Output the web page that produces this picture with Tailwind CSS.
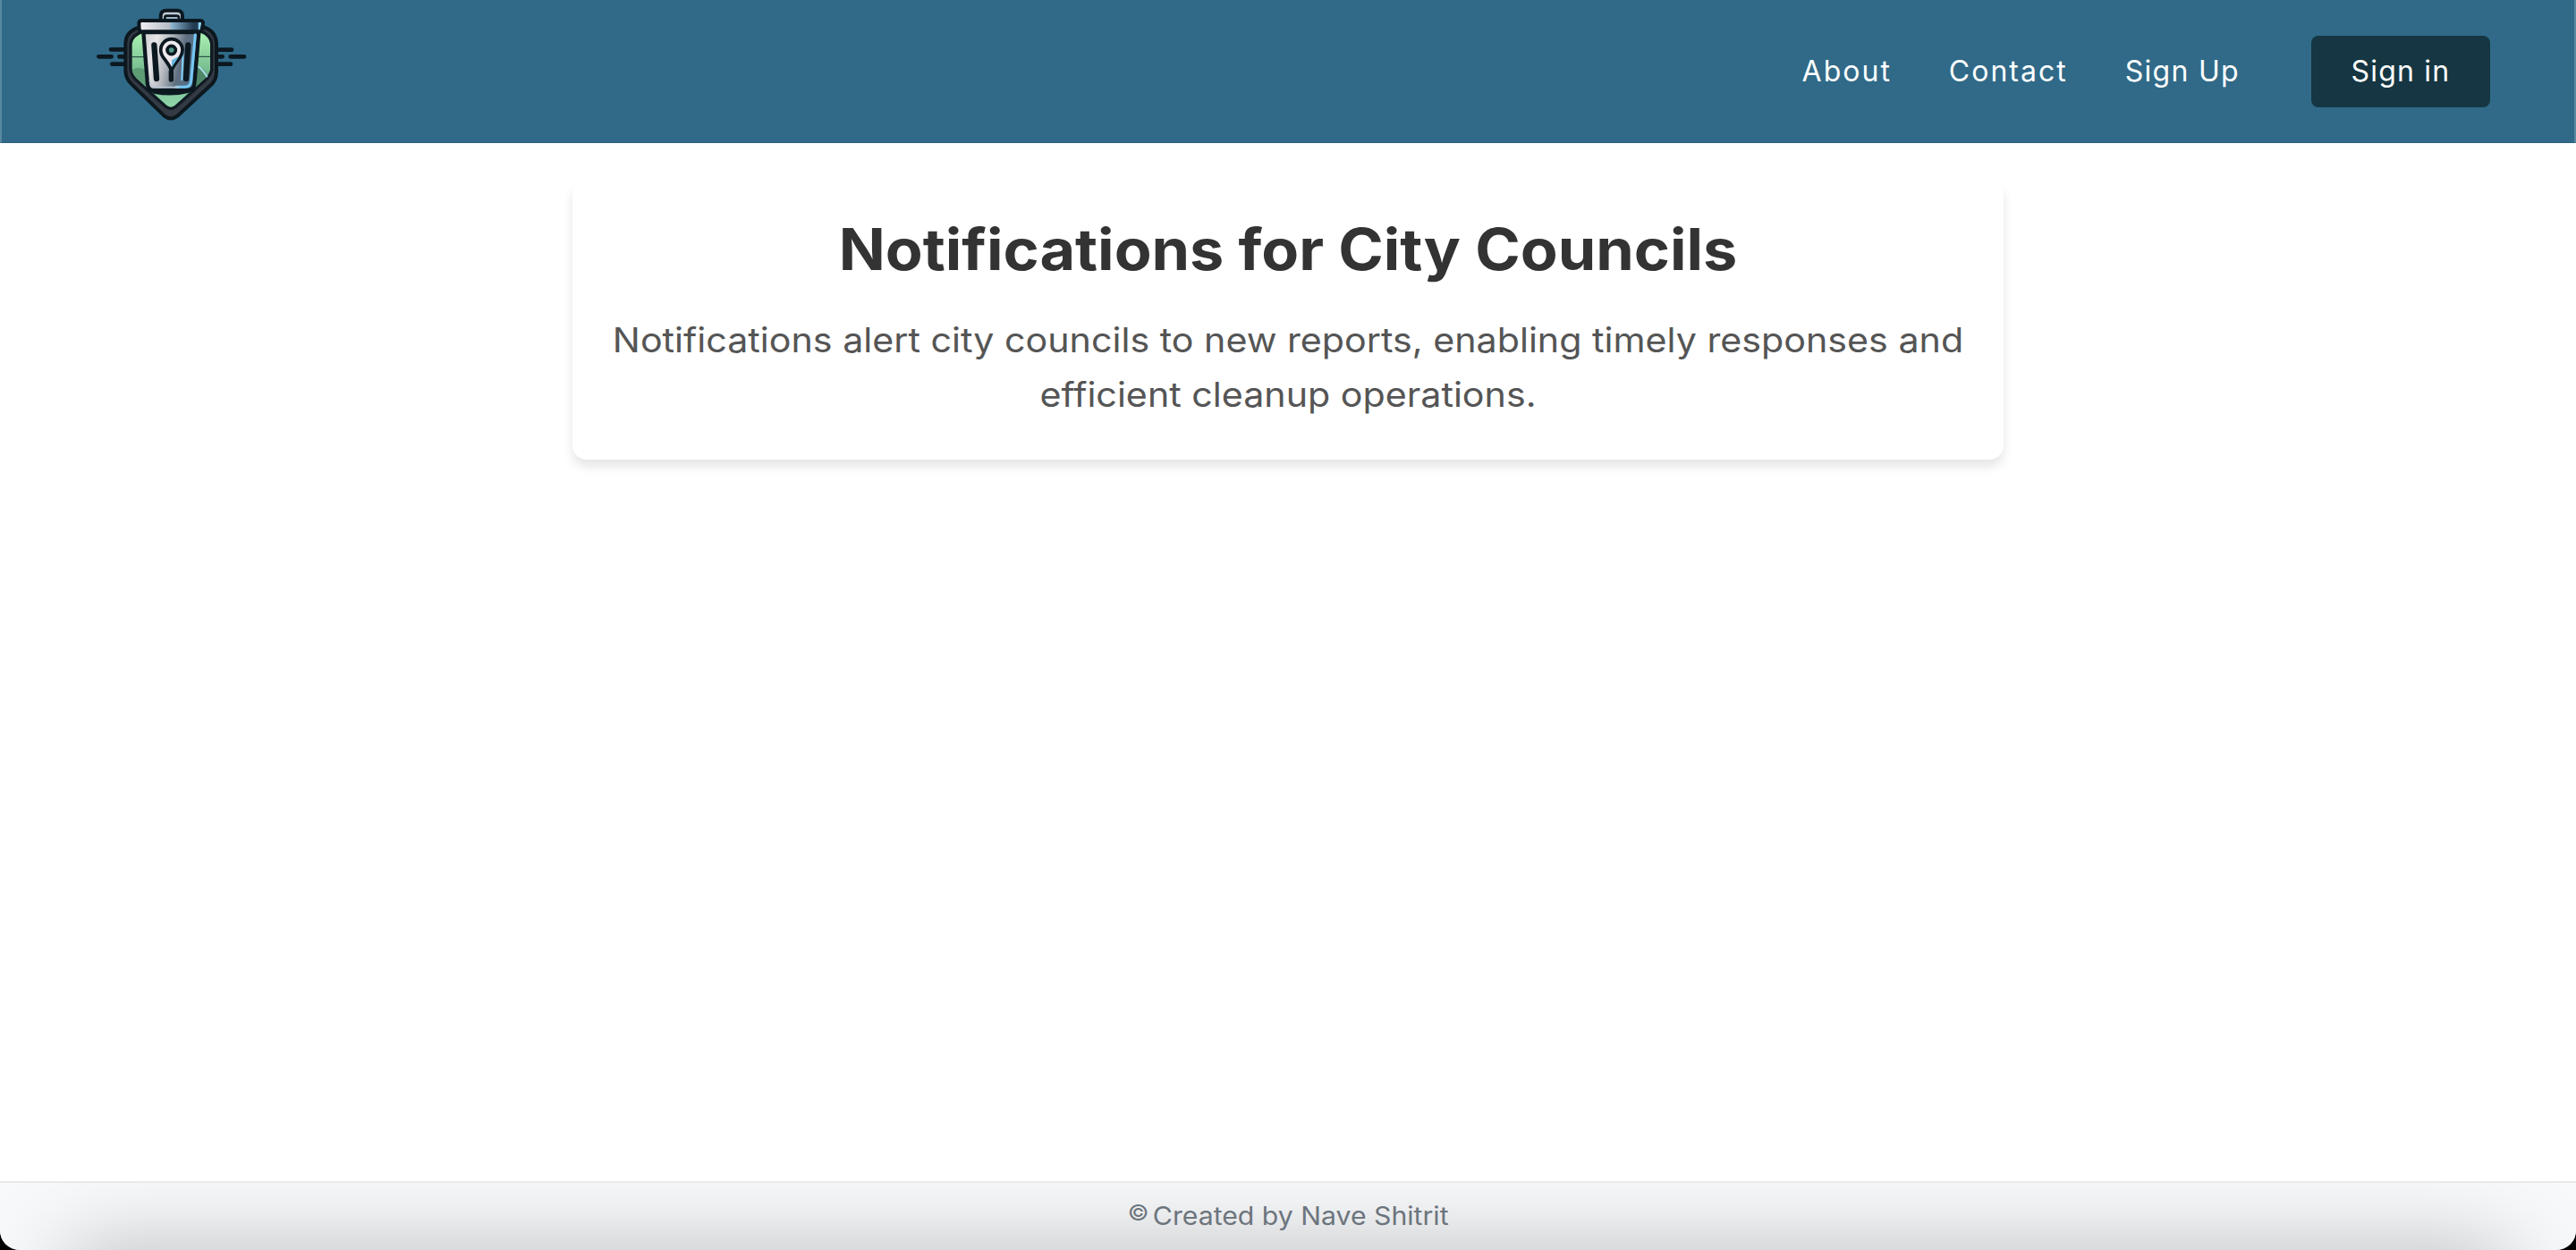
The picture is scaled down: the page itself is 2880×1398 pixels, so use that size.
<!DOCTYPE html>
<html lang="en">
<head>
<meta charset="utf-8">
<title>Notifications for City Councils</title>
<script src="https://cdn.jsdelivr.net/npm/@tailwindcss/browser@4"></script>
</head>
<body class="bg-black font-['Inter',sans-serif]">
<div class="flex h-[1398px] w-full flex-col overflow-hidden rounded-b-[22px] bg-white">
  <header class="flex h-40 shrink-0 items-center justify-between border-x-2 border-b border-x-[#5988a2] border-b-[#2b627f] bg-[#306a88] pr-[94px] pl-[88px] text-[32px] text-white">
    <svg class="h-40 w-[200px]" viewBox="0 0 600 480" fill="none" stroke-linecap="round" stroke-linejoin="round">
      <defs>
        <linearGradient id="green" x1="0" y1="0" x2="0" y2="1"><stop offset="0" stop-color="#aef5b4"/><stop offset=".55" stop-color="#72b78c"/><stop offset="1" stop-color="#91d7ac"/></linearGradient>
        <linearGradient id="metal" x1="0" y1="0" x2="1" y2=".25"><stop offset="0" stop-color="#c9cacd"/><stop offset=".25" stop-color="#e8e6e8"/><stop offset=".5" stop-color="#b4b8be"/><stop offset=".75" stop-color="#5f6f80"/><stop offset="1" stop-color="#52708a"/></linearGradient>
        <linearGradient id="lid" x1="0" y1="0" x2="1" y2="0"><stop offset="0" stop-color="#f5f3f4"/><stop offset=".48" stop-color="#b4bcc4"/><stop offset=".5" stop-color="#90b8d2"/><stop offset=".85" stop-color="#213c53"/><stop offset=".92" stop-color="#213c53"/><stop offset=".93" stop-color="#8fd2f5"/></linearGradient>
      </defs>
      <g stroke="#0c1820" stroke-width="14"><path d="M102 166h48M61 190h43M130 190h20M106 215h44M460 167h47M460 190h16M503 190h46M460 215h44"/></g>
      <path d="M205 90Q153 101 151 145V238Q152 264 172 283L281 389Q303 406 325 389L440 283Q456 266 456 240V145Q453 98 400 88Z" fill="#343a43" stroke="#0c171e" stroke-width="12"/>
      <path d="M207 106Q170 120 168 147V233Q170 251 185 267L288 359Q303 369 318 359L421 267Q436 252 440 234V147Q438 118 400 103Z" fill="url(#green)" stroke="#101b23" stroke-width="10"/>
      <path d="M173 233Q202 220 224 240V292L190 264Q175 250 173 233Z" fill="#5d9c74"/>
      <path d="M390 225Q420 230 426 254L389 288Z" fill="#4d8767"/>
      <path d="M173 191h39M398 190h38" stroke="#173c38" stroke-width="3"/>
      <path d="M392 221Q408 232 424 256" stroke="#a9dfe8" stroke-width="6"/>
      <path d="M222 296L246 314Q303 326 362 312L388 294Z" fill="#0c1820"/>
      <path d="M269 69V52Q270 35 288 35H325Q342 36 342 53V69" fill="#c4cbd0" stroke="#0c1820" stroke-width="12"/>
      <path d="M283 66V58Q283 53 289 53H323Q330 53 330 60V66" fill="#9fb4c2" stroke="#0c1820" stroke-width="8"/>
      <path d="M211 108L225 283Q227 303 247 303H360Q380 302 382 283L397 108Z" fill="url(#metal)" stroke="#0c1820" stroke-width="13"/>
      <path d="M385 116L371 272Q368 291 350 292H320" stroke="#75c9f5" stroke-width="9"/>
      <path d="M232 271Q234 292 250 293H330" stroke="#b8c7d3" stroke-width="5"/>
      <path d="M204 69H402Q412 70 411 80L407 99Q406 106 398 106H206Q198 106 197 99L196 79Q196 70 204 69Z" fill="url(#lid)" stroke="#0c1820" stroke-width="12"/>
      <path d="M344 170L340 268" stroke="#80d0f7" stroke-width="6"/>
      <path d="M247 151L255 264M361 151L354 264" stroke="#0c1820" stroke-width="19"/>
      <path d="M305 236Q298 219 284 201Q269 184 269 168C269 147 285 131 305 131S342 147 342 168Q342 184 327 201Q313 219 305 236Z" fill="#eee9ed" stroke="#0c1820" stroke-width="11"/>
      <path d="M306 226Q318 208 331 188L306 202Z" fill="#68b8df"/>
      <path d="M304 240V267" stroke="#0c1820" stroke-width="16"/>
      <circle cx="305" cy="168" r="14" fill="#559b8a" stroke="#0c1820" stroke-width="11"/>
    </svg>
    <nav class="flex items-center">
      <a class="mr-16 tracking-[2px]">About</a>
      <a class="mr-16 tracking-[2px]">Contact</a>
      <a class="mr-20 tracking-[1.3px]">Sign Up</a>
      <a class="flex h-20 w-[200px] items-center justify-center rounded-lg bg-[#153642] tracking-[1.2px]">Sign in</a>
    </nav>
  </header>
  <main class="flex-1 pt-10">
    <section class="mx-auto h-[314px] w-[1600px] rounded-2xl bg-white pt-10 text-center shadow-[0_8px_12px_rgba(0,0,0,0.1)]">
      <h1 class="scale-x-[1.068] text-[64px] leading-[77px] font-bold text-[#333]">Notifications for City Councils</h1>
      <p class="mt-[33px] scale-x-[1.073] text-[38.4px] leading-[61.44px] text-[#555]"><span class="whitespace-nowrap">Notifications alert city councils to new reports, enabling timely responses and</span><br>efficient cleanup operations.</p>
    </section>
  </main>
  <footer class="relative flex h-[77px] shrink-0 items-center justify-center border-t-2 border-[#e7e9eb] bg-[#f8f9fb] text-[28px] text-[#6c757d]">
    <div class="pointer-events-none absolute inset-0 overflow-hidden"><div class="absolute inset-x-[85px] top-[85px] h-20 shadow-[0_0_100px_10px_rgba(0,0,0,0.26)]"></div></div>
    <p class="relative mb-0.5 flex scale-x-[1.079] gap-1"><span class="text-[24px]">©</span> Created by Nave Shitrit</p>
  </footer>
</div>
</body>
</html>
